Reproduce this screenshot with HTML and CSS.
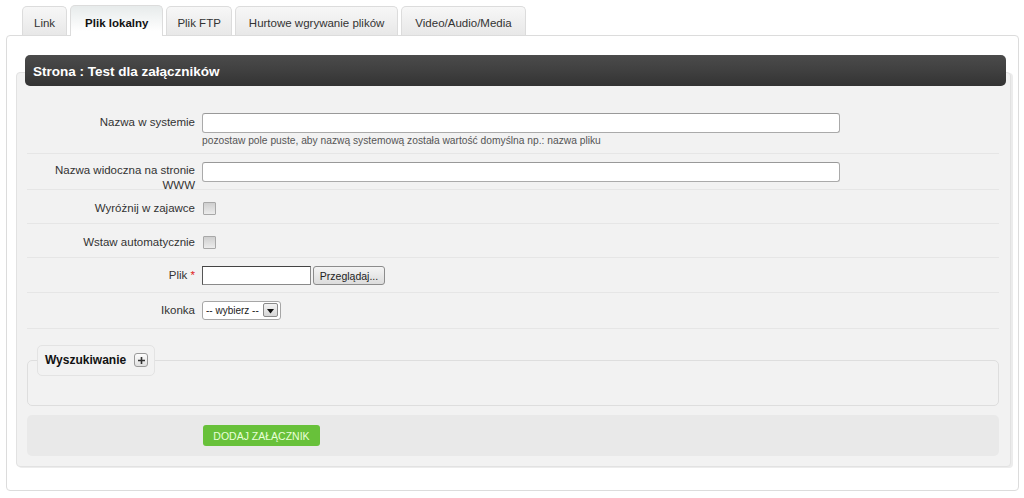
FILE: index.html
```html
<!DOCTYPE html>
<html lang="pl">
<head>
<meta charset="utf-8">
<title>Plik lokalny</title>
<link rel="stylesheet" href="styles.css">
</head>
<body>
<ul class="tabs">
  <li class="tab">Link</li>
  <li class="tab active">Plik lokalny</li>
  <li class="tab">Plik FTP</li>
  <li class="tab">Hurtowe wgrywanie plików</li>
  <li class="tab">Video/Audio/Media</li>
</ul>
<div class="panel">
  <div class="titlebar">Strona : Test dla załączników</div>
  <form class="gray">
    <div class="row row-first">
      <label class="lbl">Nazwa w systemie</label>
      <div class="field">
        <input type="text" class="txt">
        <div class="hint">pozostaw pole puste, aby nazwą systemową została wartość domyślna np.: nazwa pliku</div>
      </div>
    </div>
    <div class="row">
      <label class="lbl lbl-two">Nazwa widoczna na stronie WWW</label>
      <div class="field"><input type="text" class="txt"></div>
    </div>
    <div class="row row-check">
      <label class="lbl">Wyróżnij w zajawce</label>
      <div class="field"><input type="checkbox" class="chk"></div>
    </div>
    <div class="row row-check">
      <label class="lbl">Wstaw automatycznie</label>
      <div class="field"><input type="checkbox" class="chk"></div>
    </div>
    <div class="row row-file">
      <label class="lbl">Plik <span class="req">*</span></label>
      <div class="field file">
        <input type="text" class="filetxt">
        <button type="button" class="browse">Przeglądaj...</button>
      </div>
    </div>
    <div class="row">
      <label class="lbl">Ikonka</label>
      <div class="field">
        <div class="selwrap">
          <select class="sel"><option>-- wybierz --</option></select>
          <span class="arrow"><svg width="9" height="5" viewBox="0 0 9 5"><path d="M1 0h7L4.5 4.5z" fill="#111"/></svg></span>
        </div>
      </div>
    </div>
    <fieldset class="search">
      <legend class="legend">Wyszukiwanie <span class="plus"><svg width="9" height="9" viewBox="0 0 9 9"><path d="M4.5 1v7M1 4.5h7" stroke="#333" stroke-width="1.6"/></svg></span></legend>
    </fieldset>
    <div class="submitbar">
      <button type="button" class="submit">DODAJ ZAŁĄCZNIK</button>
    </div>
  </form>
</div>
</body>
</html>
```
FILE: styles.css
```css
* { box-sizing: border-box; }
html, body { margin: 0; padding: 0; background: #fff; }
body {
  font-family: Tahoma, "Liberation Sans", Arial, sans-serif;
  font-size: 11.5px;
  color: #333;
}
.tabs {
  list-style: none;
  margin: 5px 0 0 0;
  padding: 0 0 0 22px;
  display: flex;
  gap: 3px;
  align-items: flex-end;
  position: relative;
  z-index: 2;
}
.tab {
  height: 29px;
  padding: 0 13px;
  line-height: 32px;
  color: #333;
  border: 1px solid #dcdcdc;
  border-bottom: none;
  border-radius: 5px 5px 0 0;
  background: linear-gradient(#f7f7f7, #e8e8e8);
}
.tab:first-child { padding: 0 11px; }
.tab:nth-child(3) { padding: 0 10px; }
.tab.active {
  height: 31px;
  margin-bottom: -1px;
  padding: 0 14px;
  font-weight: bold;
  color: #111;
  background: linear-gradient(#e7ebeb, #fff 85%);
  line-height: 35px;
}
.panel {
  margin: 0 5px 0 6px;
  border: 1px solid #dcdcdc;
  border-radius: 4px;
  padding: 19px 7px 23px 9px;
  height: 456px;
}
.titlebar {
  position: relative;
  z-index: 1;
  margin: 0 5px 0 9px;
  height: 31px;
  line-height: 33px;
  padding-left: 8px;
  background: linear-gradient(#4b4b4b, #404040 50%, #333);
  border-radius: 5px;
  color: #fff;
  font-weight: bold;
  font-size: 13.5px;
}
.gray {
  margin: -14px 0 0 0;
  padding: 32px 11px 10px 10px;
  background: #f2f2f2;
  border: 1px solid #e2e2e2;
  border-radius: 4px;
  box-shadow: 2px 1px 0 #ececec;
}
.row {
  display: flex;
  align-items: flex-start;
  gap: 7px;
  padding: 8px 0 0;
  border-bottom: 1px solid #e6e6e6;
  height: 36px;
}
.row-first { height: 49px; }
.row-check { height: 34px; }
.row-file { height: 35px; }
.lbl {
  width: 168px;
  flex: none;
  text-align: right;
  line-height: 18px;
  color: #333;
}
.row-check .lbl { line-height: 20px; }
.lbl-two { line-height: 15px; padding-top: 1px; }
.req { color: #e02020; }
.field { flex: 1; }
.txt {
  display: block;
  width: 638px;
  height: 20px;
  border: 1px solid #aaa;
  border-top-color: #999;
  border-radius: 3px;
  background: #fff;
  margin: 0;
}
.hint {
  font-size: 10.25px;
  color: #555;
  margin-top: 1px;
  line-height: 14px;
}
.chk {
  -webkit-appearance: none;
  appearance: none;
  display: block;
  width: 13px;
  height: 13px;
  margin: 4px 0 0 1px;
  border: 1px solid #a8a8a8;
  border-radius: 1px;
  background: linear-gradient(#cfcfcf, #ececec);
}
.file { display: flex; gap: 2px; align-items: center; }
.filetxt {
  width: 109px;
  height: 19px;
  margin: 0;
  border: 1px solid #8a8a8a;
  border-top-color: #444;
  border-left-color: #555;
  background: #fff;
}
.browse {
  height: 19px;
  width: 72px;
  padding: 0;
  font-family: inherit;
  font-size: 10.5px;
  color: #222;
  border: 1px solid #8c8c8c;
  border-radius: 3px;
  background: linear-gradient(#f4f4f4, #dcdcdc);
}
.selwrap {
  position: relative;
  width: 79px;
  height: 19px;
}
.sel {
  -webkit-appearance: none;
  appearance: none;
  width: 79px;
  height: 19px;
  padding: 0 0 0 3px;
  margin: 0;
  font-family: inherit;
  font-size: 10px;
  color: #222;
  border: 1px solid #a6a6a6;
  border-radius: 3px;
  background: #fff;
}
.arrow {
  position: absolute;
  right: 3px;
  top: 2px;
  width: 15px;
  height: 14px;
  border: 1px solid #8a8a8a;
  border-radius: 2px;
  background: linear-gradient(#f3f3f3, #d6d6d6);
  display: flex;
  align-items: flex-end;
  justify-content: center;
  padding-bottom: 2px;
  pointer-events: none;
}
.search {
  margin: 16px 0 0 0;
  padding: 0 0 29px 0;
  border: 1px solid #dedede;
  border-radius: 5px;
  min-width: 0;
}
.legend {
  margin-left: 9px;
  padding: 0 6px 0 7px;
  height: 31px;
  line-height: 29px;
  background: #f2f2f2;
  border: 1px solid #e3e3e3;
  border-radius: 5px;
  font-weight: bold;
  font-size: 12px;
  color: #111;
  display: flex;
  align-items: center;
  gap: 8px;
}
.plus {
  width: 14px;
  height: 14px;
  border: 1px solid #999;
  border-radius: 3px;
  background: linear-gradient(#fdfdfd, #e0e0e0);
  display: flex;
  align-items: center;
  justify-content: center;
  margin-top: -1px;
}
.submitbar {
  margin-top: 9px;
  height: 41px;
  padding: 10px 0 0 176px;
  background: #e9e9e9;
  border-radius: 5px;
}
.submit {
  width: 117px;
  height: 21px;
  padding: 0;
  border: none;
  border-radius: 3px;
  background: #68c13a;
  color: #e8ffd8;
  font-family: inherit;
  font-size: 10.5px;
}
```
